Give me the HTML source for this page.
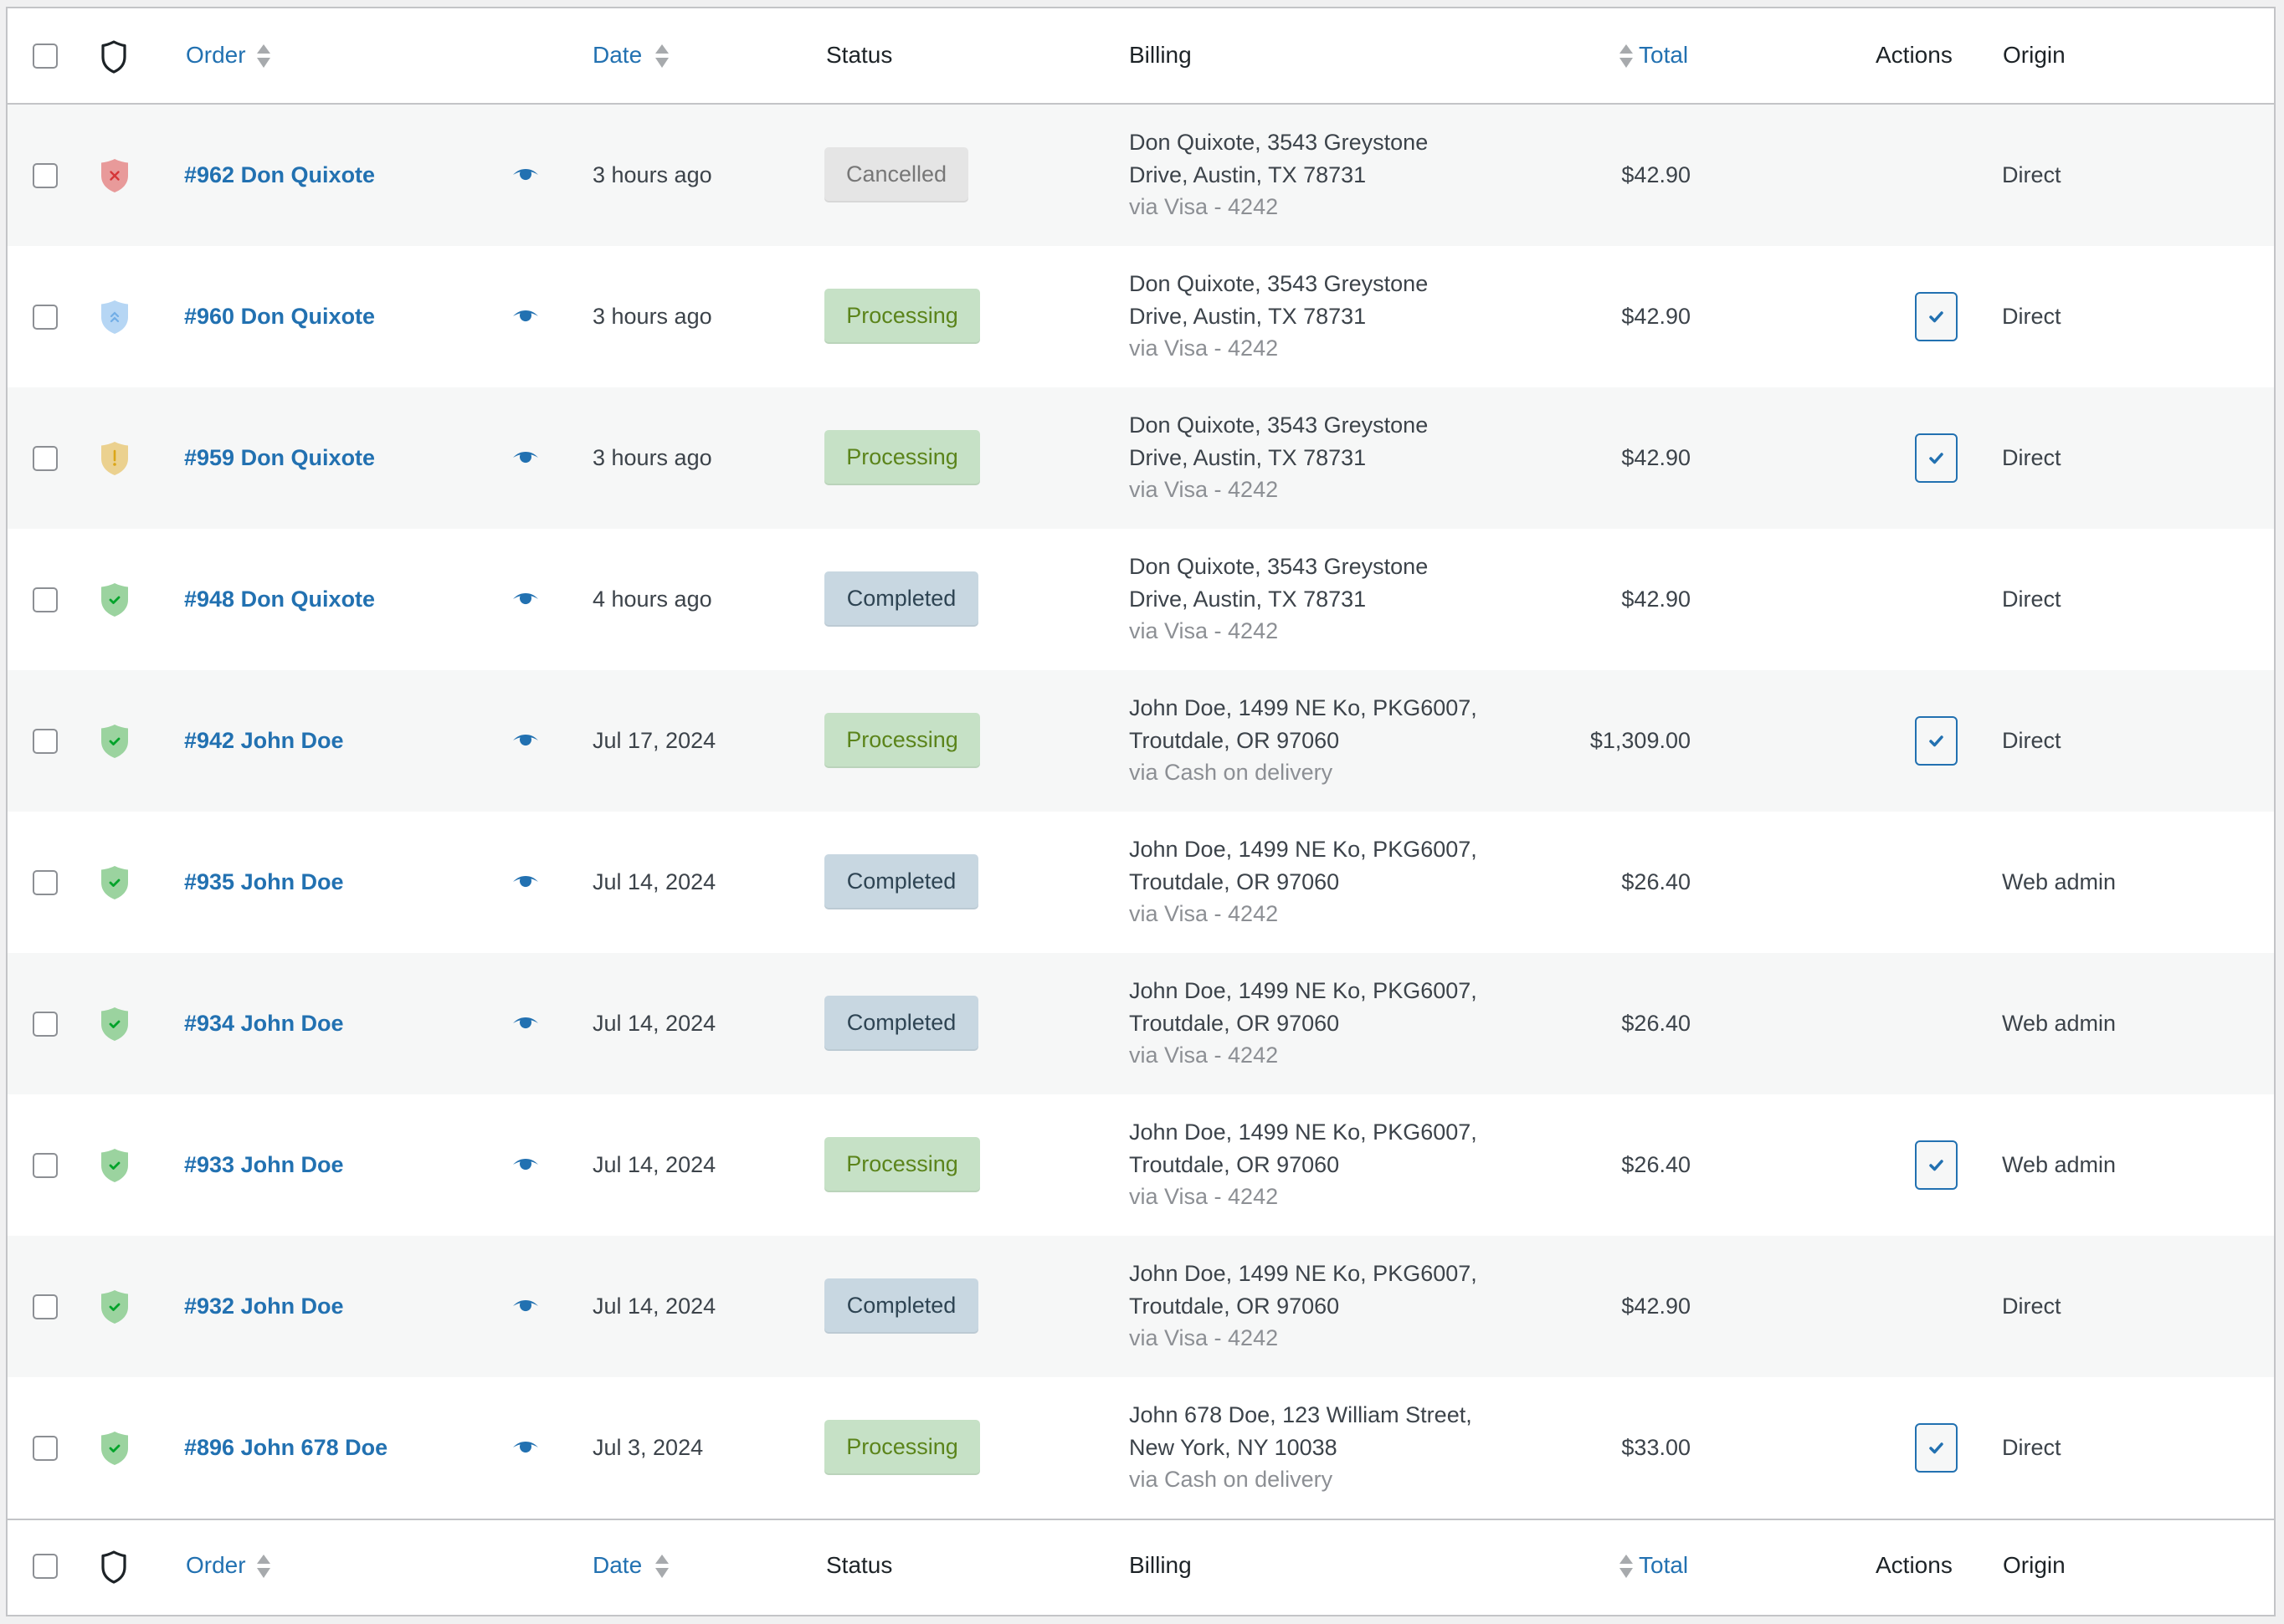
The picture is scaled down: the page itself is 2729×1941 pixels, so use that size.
<!DOCTYPE html>
<html><head><meta charset="utf-8"><style>
*{margin:0;padding:0;box-sizing:border-box}
body{width:2729px;height:1941px;background:#f0f0f1;font-family:"Liberation Sans",sans-serif;font-size:27px;color:#3c434a;position:relative;overflow:hidden}
#t{position:absolute;left:7px;top:8px;width:2712px;height:1924px;border:2px solid #c3c4c7;background:#fff}
.hd{position:absolute;left:0;width:2708px;height:114px;background:#fff}
.row{position:absolute;left:0;width:2708px;height:169px}
.row.s{background:#f6f7f7}
.a{position:absolute;line-height:38px;white-space:nowrap}
.cb{position:absolute;left:30px;width:30px;height:30px;border:2px solid #8c8f94;border-radius:5px;background:#fff}
.sh{position:absolute;left:110px}
.lk{color:#2271b1;font-weight:bold}
.hl{color:#2271b1}
.hh{color:#1d2327;font-size:28px}
.pill{position:absolute;left:976px;height:66px;border-radius:5px;line-height:64px;text-align:center;box-shadow:inset 0 -2px 0 rgba(0,0,0,.06)}
.can{background:#e5e5e5;color:#777;width:172px}
.pro{background:#c6e1c6;color:#5b841b;width:186px}
.com{background:#c8d7e1;color:#2e4453;width:184px}
.bill{position:absolute;left:1340px;top:26px;line-height:38.5px}
.via{color:#8c8f94}
.tot{position:absolute;right:697px;top:65px;line-height:38px}
.act{position:absolute;left:2279px;width:51px;height:59px;border:2px solid #2271b1;border-radius:6px;background:#f6f7f7}
.eye{position:absolute;left:604px}
.ht{font-size:28px}
</style></head><body>
<div id="t">

<div class="hd" style="top:0;border-bottom:2px solid #c3c4c7;height:115px">
 <div class="cb" style="top:42px"></div>
 <svg class="sh" style="top:38px;left:111px" width="32" height="40" viewBox="0 0 32 40"><path d="M16 2 C11 4.5 7 6 3 6.5 V20 C3 29 8 34.5 16 38 C24 34.5 29 29 29 20 V6.5 C25 6 21 4.5 16 2Z" fill="none" stroke="#1d2327" stroke-width="3.2" stroke-linejoin="round"/></svg>
 <div class="a hl ht" style="left:213px;top:37px">Order</div>
 <svg style="position:absolute;left:298px;top:43px" width="18" height="30"><path d="M8 0L16 11H0Z" fill="#a7aaad"/><path d="M0 16H16L8 28Z" fill="#a7aaad"/></svg>
 <div class="a hl ht" style="left:699px;top:37px">Date</div>
 <svg style="position:absolute;left:774px;top:43px" width="18" height="30"><path d="M8 0L16 11H0Z" fill="#a7aaad"/><path d="M0 16H16L8 28Z" fill="#a7aaad"/></svg>
 <div class="a hh" style="left:978px;top:37px">Status</div>
 <div class="a hh" style="left:1340px;top:37px">Billing</div>
 <svg style="position:absolute;left:1926px;top:43px" width="18" height="30"><path d="M8 0L16 11H0Z" fill="#a7aaad"/><path d="M0 16H16L8 28Z" fill="#a7aaad"/></svg>
 <div class="a hl ht" style="left:1949px;top:37px">Total</div>
 <div class="a hh" style="left:2232px;top:37px">Actions</div>
 <div class="a hh" style="left:2384px;top:37px">Origin</div>
</div>

<div class="row s" style="top:115px">
 <div class="cb" style="top:70px"></div>
 <svg class="sh" style="top:64px" width="36" height="42" viewBox="0 0 36 42"><path d="M18 1C13 3.5 7 5 2 5.5V21C2 31 9 37.5 18 41C27 37.5 34 31 34 21V5.5C29 5 23 3.5 18 1Z" fill="#e89a9a"/><path d="M13.5 16.5L22.5 25.5M22.5 16.5L13.5 25.5" stroke="#d63638" stroke-width="2.4" stroke-linecap="round"/></svg>
 <div class="a lk" style="left:211px;top:65px">#962 Don Quixote</div>
 <svg class="eye" style="top:77px" width="30" height="14" viewBox="0 0 30 14"><path d="M0 7C5 1.5 10 0 15 0S25 1.5 30 7C25 4 22 3.5 21.5 3.5A7 7 0 1 1 8.5 3.5C8 3.5 5 4 0 7Z" fill="#2271b1"/></svg>
 <div class="a" style="left:699px;top:65px">3 hours ago</div>
 <div class="pill can" style="top:51px">Cancelled</div>
 <div class="bill">Don Quixote, 3543 Greystone<br>Drive, Austin, TX 78731<br><span class="via">via Visa - 4242</span></div>
 <div class="tot">$42.90</div>
 <div class="a" style="left:2383px;top:65px">Direct</div>
</div>

<div class="row" style="top:284px">
 <div class="cb" style="top:70px"></div>
 <svg class="sh" style="top:64px" width="36" height="42" viewBox="0 0 36 42"><path d="M18 1C13 3.5 7 5 2 5.5V21C2 31 9 37.5 18 41C27 37.5 34 31 34 21V5.5C29 5 23 3.5 18 1Z" fill="#b6d6f4"/><path d="M14 20L18 16L22 20M14 26L18 22L22 26" fill="none" stroke="#72aee6" stroke-width="2.2" stroke-linecap="round"/></svg>
 <div class="a lk" style="left:211px;top:65px">#960 Don Quixote</div>
 <svg class="eye" style="top:77px" width="30" height="14" viewBox="0 0 30 14"><path d="M0 7C5 1.5 10 0 15 0S25 1.5 30 7C25 4 22 3.5 21.5 3.5A7 7 0 1 1 8.5 3.5C8 3.5 5 4 0 7Z" fill="#2271b1"/></svg>
 <div class="a" style="left:699px;top:65px">3 hours ago</div>
 <div class="pill pro" style="top:51px">Processing</div>
 <div class="bill">Don Quixote, 3543 Greystone<br>Drive, Austin, TX 78731<br><span class="via">via Visa - 4242</span></div>
 <div class="tot">$42.90</div>
 <div class="act" style="top:55px"><svg width="47" height="55" viewBox="0 0 47 55"><path d="M17 28L21.5 32.5L30 23" fill="none" stroke="#2271b1" stroke-width="3.5" stroke-linecap="round" stroke-linejoin="round"/></svg></div>
 <div class="a" style="left:2383px;top:65px">Direct</div>
</div>

<div class="row s" style="top:453px">
 <div class="cb" style="top:70px"></div>
 <svg class="sh" style="top:64px" width="36" height="42" viewBox="0 0 36 42"><path d="M18 1C13 3.5 7 5 2 5.5V21C2 31 9 37.5 18 41C27 37.5 34 31 34 21V5.5C29 5 23 3.5 18 1Z" fill="#ebd18f"/><path d="M18 12V23" stroke="#dba617" stroke-width="2.6" stroke-linecap="round"/><circle cx="18" cy="28" r="1.8" fill="#dba617"/></svg>
 <div class="a lk" style="left:211px;top:65px">#959 Don Quixote</div>
 <svg class="eye" style="top:77px" width="30" height="14" viewBox="0 0 30 14"><path d="M0 7C5 1.5 10 0 15 0S25 1.5 30 7C25 4 22 3.5 21.5 3.5A7 7 0 1 1 8.5 3.5C8 3.5 5 4 0 7Z" fill="#2271b1"/></svg>
 <div class="a" style="left:699px;top:65px">3 hours ago</div>
 <div class="pill pro" style="top:51px">Processing</div>
 <div class="bill">Don Quixote, 3543 Greystone<br>Drive, Austin, TX 78731<br><span class="via">via Visa - 4242</span></div>
 <div class="tot">$42.90</div>
 <div class="act" style="top:55px"><svg width="47" height="55" viewBox="0 0 47 55"><path d="M17 28L21.5 32.5L30 23" fill="none" stroke="#2271b1" stroke-width="3.5" stroke-linecap="round" stroke-linejoin="round"/></svg></div>
 <div class="a" style="left:2383px;top:65px">Direct</div>
</div>

<div class="row" style="top:622px">
 <div class="cb" style="top:70px"></div>
 <svg class="sh" style="top:64px" width="36" height="42" viewBox="0 0 36 42"><path d="M18 1C13 3.5 7 5 2 5.5V21C2 31 9 37.5 18 41C27 37.5 34 31 34 21V5.5C29 5 23 3.5 18 1Z" fill="#9bd39f"/><path d="M13 21L16.5 24.5L23 18" fill="none" stroke="#00a32a" stroke-width="2.8" stroke-linecap="round" stroke-linejoin="round"/></svg>
 <div class="a lk" style="left:211px;top:65px">#948 Don Quixote</div>
 <svg class="eye" style="top:77px" width="30" height="14" viewBox="0 0 30 14"><path d="M0 7C5 1.5 10 0 15 0S25 1.5 30 7C25 4 22 3.5 21.5 3.5A7 7 0 1 1 8.5 3.5C8 3.5 5 4 0 7Z" fill="#2271b1"/></svg>
 <div class="a" style="left:699px;top:65px">4 hours ago</div>
 <div class="pill com" style="top:51px">Completed</div>
 <div class="bill">Don Quixote, 3543 Greystone<br>Drive, Austin, TX 78731<br><span class="via">via Visa - 4242</span></div>
 <div class="tot">$42.90</div>
 <div class="a" style="left:2383px;top:65px">Direct</div>
</div>

<div class="row s" style="top:791px">
 <div class="cb" style="top:70px"></div>
 <svg class="sh" style="top:64px" width="36" height="42" viewBox="0 0 36 42"><path d="M18 1C13 3.5 7 5 2 5.5V21C2 31 9 37.5 18 41C27 37.5 34 31 34 21V5.5C29 5 23 3.5 18 1Z" fill="#9bd39f"/><path d="M13 21L16.5 24.5L23 18" fill="none" stroke="#00a32a" stroke-width="2.8" stroke-linecap="round" stroke-linejoin="round"/></svg>
 <div class="a lk" style="left:211px;top:65px">#942 John Doe</div>
 <svg class="eye" style="top:77px" width="30" height="14" viewBox="0 0 30 14"><path d="M0 7C5 1.5 10 0 15 0S25 1.5 30 7C25 4 22 3.5 21.5 3.5A7 7 0 1 1 8.5 3.5C8 3.5 5 4 0 7Z" fill="#2271b1"/></svg>
 <div class="a" style="left:699px;top:65px">Jul 17, 2024</div>
 <div class="pill pro" style="top:51px">Processing</div>
 <div class="bill">John Doe, 1499 NE Ko, PKG6007,<br>Troutdale, OR 97060<br><span class="via">via Cash on delivery</span></div>
 <div class="tot">$1,309.00</div>
 <div class="act" style="top:55px"><svg width="47" height="55" viewBox="0 0 47 55"><path d="M17 28L21.5 32.5L30 23" fill="none" stroke="#2271b1" stroke-width="3.5" stroke-linecap="round" stroke-linejoin="round"/></svg></div>
 <div class="a" style="left:2383px;top:65px">Direct</div>
</div>

<div class="row" style="top:960px">
 <div class="cb" style="top:70px"></div>
 <svg class="sh" style="top:64px" width="36" height="42" viewBox="0 0 36 42"><path d="M18 1C13 3.5 7 5 2 5.5V21C2 31 9 37.5 18 41C27 37.5 34 31 34 21V5.5C29 5 23 3.5 18 1Z" fill="#9bd39f"/><path d="M13 21L16.5 24.5L23 18" fill="none" stroke="#00a32a" stroke-width="2.8" stroke-linecap="round" stroke-linejoin="round"/></svg>
 <div class="a lk" style="left:211px;top:65px">#935 John Doe</div>
 <svg class="eye" style="top:77px" width="30" height="14" viewBox="0 0 30 14"><path d="M0 7C5 1.5 10 0 15 0S25 1.5 30 7C25 4 22 3.5 21.5 3.5A7 7 0 1 1 8.5 3.5C8 3.5 5 4 0 7Z" fill="#2271b1"/></svg>
 <div class="a" style="left:699px;top:65px">Jul 14, 2024</div>
 <div class="pill com" style="top:51px">Completed</div>
 <div class="bill">John Doe, 1499 NE Ko, PKG6007,<br>Troutdale, OR 97060<br><span class="via">via Visa - 4242</span></div>
 <div class="tot">$26.40</div>
 <div class="a" style="left:2383px;top:65px">Web admin</div>
</div>

<div class="row s" style="top:1129px">
 <div class="cb" style="top:70px"></div>
 <svg class="sh" style="top:64px" width="36" height="42" viewBox="0 0 36 42"><path d="M18 1C13 3.5 7 5 2 5.5V21C2 31 9 37.5 18 41C27 37.5 34 31 34 21V5.5C29 5 23 3.5 18 1Z" fill="#9bd39f"/><path d="M13 21L16.5 24.5L23 18" fill="none" stroke="#00a32a" stroke-width="2.8" stroke-linecap="round" stroke-linejoin="round"/></svg>
 <div class="a lk" style="left:211px;top:65px">#934 John Doe</div>
 <svg class="eye" style="top:77px" width="30" height="14" viewBox="0 0 30 14"><path d="M0 7C5 1.5 10 0 15 0S25 1.5 30 7C25 4 22 3.5 21.5 3.5A7 7 0 1 1 8.5 3.5C8 3.5 5 4 0 7Z" fill="#2271b1"/></svg>
 <div class="a" style="left:699px;top:65px">Jul 14, 2024</div>
 <div class="pill com" style="top:51px">Completed</div>
 <div class="bill">John Doe, 1499 NE Ko, PKG6007,<br>Troutdale, OR 97060<br><span class="via">via Visa - 4242</span></div>
 <div class="tot">$26.40</div>
 <div class="a" style="left:2383px;top:65px">Web admin</div>
</div>

<div class="row" style="top:1298px">
 <div class="cb" style="top:70px"></div>
 <svg class="sh" style="top:64px" width="36" height="42" viewBox="0 0 36 42"><path d="M18 1C13 3.5 7 5 2 5.5V21C2 31 9 37.5 18 41C27 37.5 34 31 34 21V5.5C29 5 23 3.5 18 1Z" fill="#9bd39f"/><path d="M13 21L16.5 24.5L23 18" fill="none" stroke="#00a32a" stroke-width="2.8" stroke-linecap="round" stroke-linejoin="round"/></svg>
 <div class="a lk" style="left:211px;top:65px">#933 John Doe</div>
 <svg class="eye" style="top:77px" width="30" height="14" viewBox="0 0 30 14"><path d="M0 7C5 1.5 10 0 15 0S25 1.5 30 7C25 4 22 3.5 21.5 3.5A7 7 0 1 1 8.5 3.5C8 3.5 5 4 0 7Z" fill="#2271b1"/></svg>
 <div class="a" style="left:699px;top:65px">Jul 14, 2024</div>
 <div class="pill pro" style="top:51px">Processing</div>
 <div class="bill">John Doe, 1499 NE Ko, PKG6007,<br>Troutdale, OR 97060<br><span class="via">via Visa - 4242</span></div>
 <div class="tot">$26.40</div>
 <div class="act" style="top:55px"><svg width="47" height="55" viewBox="0 0 47 55"><path d="M17 28L21.5 32.5L30 23" fill="none" stroke="#2271b1" stroke-width="3.5" stroke-linecap="round" stroke-linejoin="round"/></svg></div>
 <div class="a" style="left:2383px;top:65px">Web admin</div>
</div>

<div class="row s" style="top:1467px">
 <div class="cb" style="top:70px"></div>
 <svg class="sh" style="top:64px" width="36" height="42" viewBox="0 0 36 42"><path d="M18 1C13 3.5 7 5 2 5.5V21C2 31 9 37.5 18 41C27 37.5 34 31 34 21V5.5C29 5 23 3.5 18 1Z" fill="#9bd39f"/><path d="M13 21L16.5 24.5L23 18" fill="none" stroke="#00a32a" stroke-width="2.8" stroke-linecap="round" stroke-linejoin="round"/></svg>
 <div class="a lk" style="left:211px;top:65px">#932 John Doe</div>
 <svg class="eye" style="top:77px" width="30" height="14" viewBox="0 0 30 14"><path d="M0 7C5 1.5 10 0 15 0S25 1.5 30 7C25 4 22 3.5 21.5 3.5A7 7 0 1 1 8.5 3.5C8 3.5 5 4 0 7Z" fill="#2271b1"/></svg>
 <div class="a" style="left:699px;top:65px">Jul 14, 2024</div>
 <div class="pill com" style="top:51px">Completed</div>
 <div class="bill">John Doe, 1499 NE Ko, PKG6007,<br>Troutdale, OR 97060<br><span class="via">via Visa - 4242</span></div>
 <div class="tot">$42.90</div>
 <div class="a" style="left:2383px;top:65px">Direct</div>
</div>

<div class="row" style="top:1636px">
 <div class="cb" style="top:70px"></div>
 <svg class="sh" style="top:64px" width="36" height="42" viewBox="0 0 36 42"><path d="M18 1C13 3.5 7 5 2 5.5V21C2 31 9 37.5 18 41C27 37.5 34 31 34 21V5.5C29 5 23 3.5 18 1Z" fill="#9bd39f"/><path d="M13 21L16.5 24.5L23 18" fill="none" stroke="#00a32a" stroke-width="2.8" stroke-linecap="round" stroke-linejoin="round"/></svg>
 <div class="a lk" style="left:211px;top:65px">#896 John 678 Doe</div>
 <svg class="eye" style="top:77px" width="30" height="14" viewBox="0 0 30 14"><path d="M0 7C5 1.5 10 0 15 0S25 1.5 30 7C25 4 22 3.5 21.5 3.5A7 7 0 1 1 8.5 3.5C8 3.5 5 4 0 7Z" fill="#2271b1"/></svg>
 <div class="a" style="left:699px;top:65px">Jul 3, 2024</div>
 <div class="pill pro" style="top:51px">Processing</div>
 <div class="bill">John 678 Doe, 123 William Street,<br>New York, NY 10038<br><span class="via">via Cash on delivery</span></div>
 <div class="tot">$33.00</div>
 <div class="act" style="top:55px"><svg width="47" height="55" viewBox="0 0 47 55"><path d="M17 28L21.5 32.5L30 23" fill="none" stroke="#2271b1" stroke-width="3.5" stroke-linecap="round" stroke-linejoin="round"/></svg></div>
 <div class="a" style="left:2383px;top:65px">Direct</div>
</div>

<div class="hd" style="top:1805px;border-top:2px solid #c3c4c7;height:115px">
 <div class="cb" style="top:40px"></div>
 <svg class="sh" style="top:36px;left:111px" width="32" height="40" viewBox="0 0 32 40"><path d="M16 2 C11 4.5 7 6 3 6.5 V20 C3 29 8 34.5 16 38 C24 34.5 29 29 29 20 V6.5 C25 6 21 4.5 16 2Z" fill="none" stroke="#1d2327" stroke-width="3.2" stroke-linejoin="round"/></svg>
 <div class="a hl ht" style="left:213px;top:35px">Order</div>
 <svg style="position:absolute;left:298px;top:41px" width="18" height="30"><path d="M8 0L16 11H0Z" fill="#a7aaad"/><path d="M0 16H16L8 28Z" fill="#a7aaad"/></svg>
 <div class="a hl ht" style="left:699px;top:35px">Date</div>
 <svg style="position:absolute;left:774px;top:41px" width="18" height="30"><path d="M8 0L16 11H0Z" fill="#a7aaad"/><path d="M0 16H16L8 28Z" fill="#a7aaad"/></svg>
 <div class="a hh" style="left:978px;top:35px">Status</div>
 <div class="a hh" style="left:1340px;top:35px">Billing</div>
 <svg style="position:absolute;left:1926px;top:41px" width="18" height="30"><path d="M8 0L16 11H0Z" fill="#a7aaad"/><path d="M0 16H16L8 28Z" fill="#a7aaad"/></svg>
 <div class="a hl ht" style="left:1949px;top:35px">Total</div>
 <div class="a hh" style="left:2232px;top:35px">Actions</div>
 <div class="a hh" style="left:2384px;top:35px">Origin</div>
</div>

</div>
</body></html>
